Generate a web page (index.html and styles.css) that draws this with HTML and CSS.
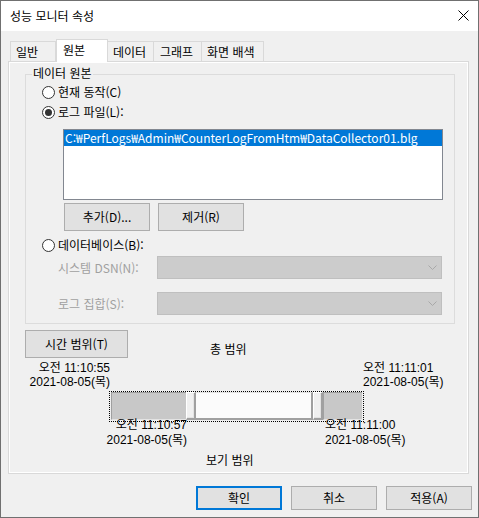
FILE: index.html
```html
<!DOCTYPE html>
<html lang="ko">
<head>
<meta charset="utf-8">
<title>성능 모니터 속성</title>
<link rel="stylesheet" href="styles.css">
</head>
<body>
<div class="window">
  <div class="titlebar">
    <span class="title">성능 모니터 속성</span>
    <svg class="close" width="11" height="11" viewBox="0 0 11 11"><path d="M0.5 0.5 L10.5 10.5 M10.5 0.5 L0.5 10.5" stroke="#000" stroke-width="1" fill="none"/></svg>
  </div>
  <div class="content">
    <div class="tabs">
      <div class="tab t1">일반</div>
      <div class="tab active t2">원본</div>
      <div class="tab t3">데이터</div>
      <div class="tab t4">그래프</div>
      <div class="tab t5">화면 배색</div>
    </div>
    <div class="panel">
      <div class="group">
        <div class="group-title">데이터 원본</div>
        <div class="radio r1"><span class="radio-dot"></span>현재 동작(C)</div>
        <div class="radio r2"><span class="radio-dot checked"></span>로그 파일(L):</div>
        <div class="list">
          <div class="list-item">C:₩PerfLogs₩Admin₩CounterLogFromHtm₩DataCollector01.blg</div>
        </div>
        <div class="btn-row">
          <div class="btn btn-small">추가(D)...</div>
          <div class="btn btn-small">제거(R)</div>
        </div>
        <div class="radio r3"><span class="radio-dot"></span>데이터베이스(B):</div>
        <div class="field f1">
          <span class="field-label">시스템 DSN(N):</span>
          <div class="combo"><svg width="9" height="5" viewBox="0 0 9 5"><path d="M0.5 0.5 L4.5 4.5 L8.5 0.5" stroke="#a8a8a8" fill="none"/></svg></div>
        </div>
        <div class="field f2">
          <span class="field-label">로그 집합(S):</span>
          <div class="combo"><svg width="9" height="5" viewBox="0 0 9 5"><path d="M0.5 0.5 L4.5 4.5 L8.5 0.5" stroke="#a8a8a8" fill="none"/></svg></div>
        </div>
      </div>

      <div class="time-top">
        <div class="btn btn-range">시간 범위(T)</div>
        <span class="total">총 범위</span>
      </div>
      <div class="labels-top">
        <div class="lbl lbl-tl"><div>오전 11:10:55</div><div>2021-08-05(목)</div></div>
        <div class="lbl lbl-tr"><div>오전 11:11:01</div><div>2021-08-05(목)</div></div>
      </div>
      <div class="slider">
        <div class="seg seg-left"></div>
        <div class="thumb"></div>
        <div class="track"></div>
        <div class="thumb"></div>
        <div class="seg seg-right"></div>
      </div>
      <div class="labels-bottom">
        <div class="lbl lbl-bl"><div>오전 11:10:57</div><div>2021-08-05(목)</div></div>
        <div class="lbl lbl-br"><div>오전 11:11:00</div><div>2021-08-05(목)</div></div>
      </div>
      <div class="view">보기 범위</div>
    </div>

    <div class="footer">
      <div class="btn btn-foot default">확인</div>
      <div class="btn btn-foot">취소</div>
      <div class="btn btn-foot">적용(A)</div>
    </div>
  </div>
</div>
</body>
</html>
```

FILE: styles.css
```css
* { box-sizing: border-box; }
html, body { margin: 0; padding: 0; }
body {
  width: 479px;
  height: 518px;
  overflow: hidden;
  font-family: "Noto Sans CJK KR", "Noto Sans", sans-serif;
  font-size: 12px;
  color: #000;
  background: #f0f0f0;
}
.window {
  width: 479px;
  height: 518px;
  border: 1px solid #707070;
  background: #f0f0f0;
}
.titlebar {
  height: 30px;
  background: #fff;
  display: flex;
  align-items: center;
  justify-content: space-between;
  padding: 0 9px 0 9px;
}
.title { line-height: 16px; }
.close { display: block; margin-top: -2px; }

.content { padding: 8px 0 0 7px; }

.tabs {
  display: flex;
  align-items: flex-end;
  height: 22px;
  margin-left: 2px;
}
.tab {
  height: 20px;
  border: 1px solid #d9d9d9;
  border-bottom: none;
  background: #f0f0f0;
  padding-left: 5px;
  line-height: 19px;
  white-space: nowrap;
}
.tab + .tab { margin-left: -1px; }
.t1 { width: 46px; }
.t3 { width: 47px; }
.t4 { width: 49px; padding-left: 6px; }
.t5 { width: 63px; }
.tab.active {
  width: 52px;
  height: 23px;
  margin-left: 0;
  margin-bottom: -1px;
  background: #fff;
  position: relative;
  padding-left: 6px;
  line-height: 19px;
}

.panel {
  width: 461px;
  height: 413px;
  border: 1px solid #d9d9d9;
  box-shadow: inset 0 0 0 1px #fff;
  padding: 12px 0 0 16px;
}

.group {
  width: 430px;
  border: 1px solid #dcdcdc;
  padding: 0 0 8px 16px;
  line-height: 16px;
}
.group-title {
  width: fit-content;
  margin: -10px 0 0 -10px;
  padding: 0 1px;
  background: #f0f0f0;
  line-height: 16px;
}
.radio {
  display: flex;
  align-items: center;
  height: 16px;
  line-height: 16px;
}
.r1 { margin-top: 3px; }
.r2 { margin-top: 4px; }
.r3 { margin-top: 6px; }
.radio-dot {
  width: 13px;
  height: 13px;
  border: 1px solid #333;
  border-radius: 50%;
  background: #fff;
  margin-right: 3px;
  display: flex;
  align-items: center;
  justify-content: center;
}
.radio-dot.checked::after {
  content: "";
  width: 7px;
  height: 7px;
  border-radius: 50%;
  background: #333;
}

.list {
  margin: 9px 0 0 21px;
  width: 380px;
  height: 71px;
  border: 1px solid #828790;
  background: #fff;
}
.list-item {
  height: 16px;
  line-height: 16px;
  background: #0078d7;
  color: #fff;
  padding-left: 1px;
  white-space: nowrap;
  overflow: hidden;
}

.btn-row {
  display: flex;
  gap: 8px;
  margin: 3px 0 0 22px;
}
.btn {
  background: #e1e1e1;
  border: 1px solid #adadad;
  display: flex;
  align-items: center;
  justify-content: center;
  line-height: 16px;
  white-space: nowrap;
}
.btn-small { width: 86px; height: 28px; }

.field {
  display: flex;
  align-items: center;
  height: 23px;
}
.f1 { margin-top: 3px; }
.f2 { margin-top: 13px; }
.field-label {
  width: 115px;
  padding-left: 16px;
  color: #a0a0a0;
}
.combo {
  width: 285px;
  height: 23px;
  background: #cccccc;
  border: 1px solid #bfbfbf;
  display: flex;
  align-items: center;
  justify-content: flex-end;
  padding-right: 4px;
}
.combo svg { display: block; }

.time-top {
  display: flex;
  margin-top: 6px;
}
.btn-range { width: 103px; height: 28px; }
.total {
  margin: 11px 0 0 82px;
  line-height: 16px;
}

.lbl {
  white-space: nowrap;
  font-family: "Liberation Sans", "Noto Sans CJK KR", sans-serif;
}
.labels-top {
  display: flex;
  margin-top: 3px;
  line-height: 14px;
}
.lbl-tl { width: 85px; text-align: right; }
.lbl-tr { margin-left: 253px; }

.slider {
  margin: 2px 0 0 84px;
  width: 255px;
  height: 31px;
  border: 1px dotted #000;
  padding: 0 1px 1px 1px;
  display: flex;
}
.seg {
  background: #c8c8c8;
  border-top: 1px solid #a0a0a0;
  border-left: 1px solid #a0a0a0;
  border-bottom: 1px solid #e3e3e3;
}
.seg-left { width: 75px; }
.seg-right { width: 39px; }
.thumb {
  width: 10px;
  background: #f0f0f0;
  border-top: 1px solid #fff;
  border-left: 1px solid #fff;
  border-right: 2px solid #a0a0a0;
  border-bottom: 2px solid #a0a0a0;
  box-shadow: inset -1px -1px 0 #e3e3e3;
}
.track {
  width: 117px;
  background: #fbfbfb;
  border-top: 1px solid #e3e3e3;
  border-right: 2px solid #a0a0a0;
  border-bottom: 2px solid #a0a0a0;
}

.labels-bottom {
  display: flex;
  margin-top: -4px;
  line-height: 15px;
}
.lbl-bl { width: 162px; text-align: right; }
.lbl-br { margin-left: 138px; }

.view {
  margin: 4px 0 0 181px;
  line-height: 16px;
}

.footer {
  display: flex;
  gap: 9px;
  margin-top: 12px;
  padding-left: 188px;
}
.btn-foot { width: 86px; height: 24px; }
.btn.default { border: 2px solid #0078d7; }
```
